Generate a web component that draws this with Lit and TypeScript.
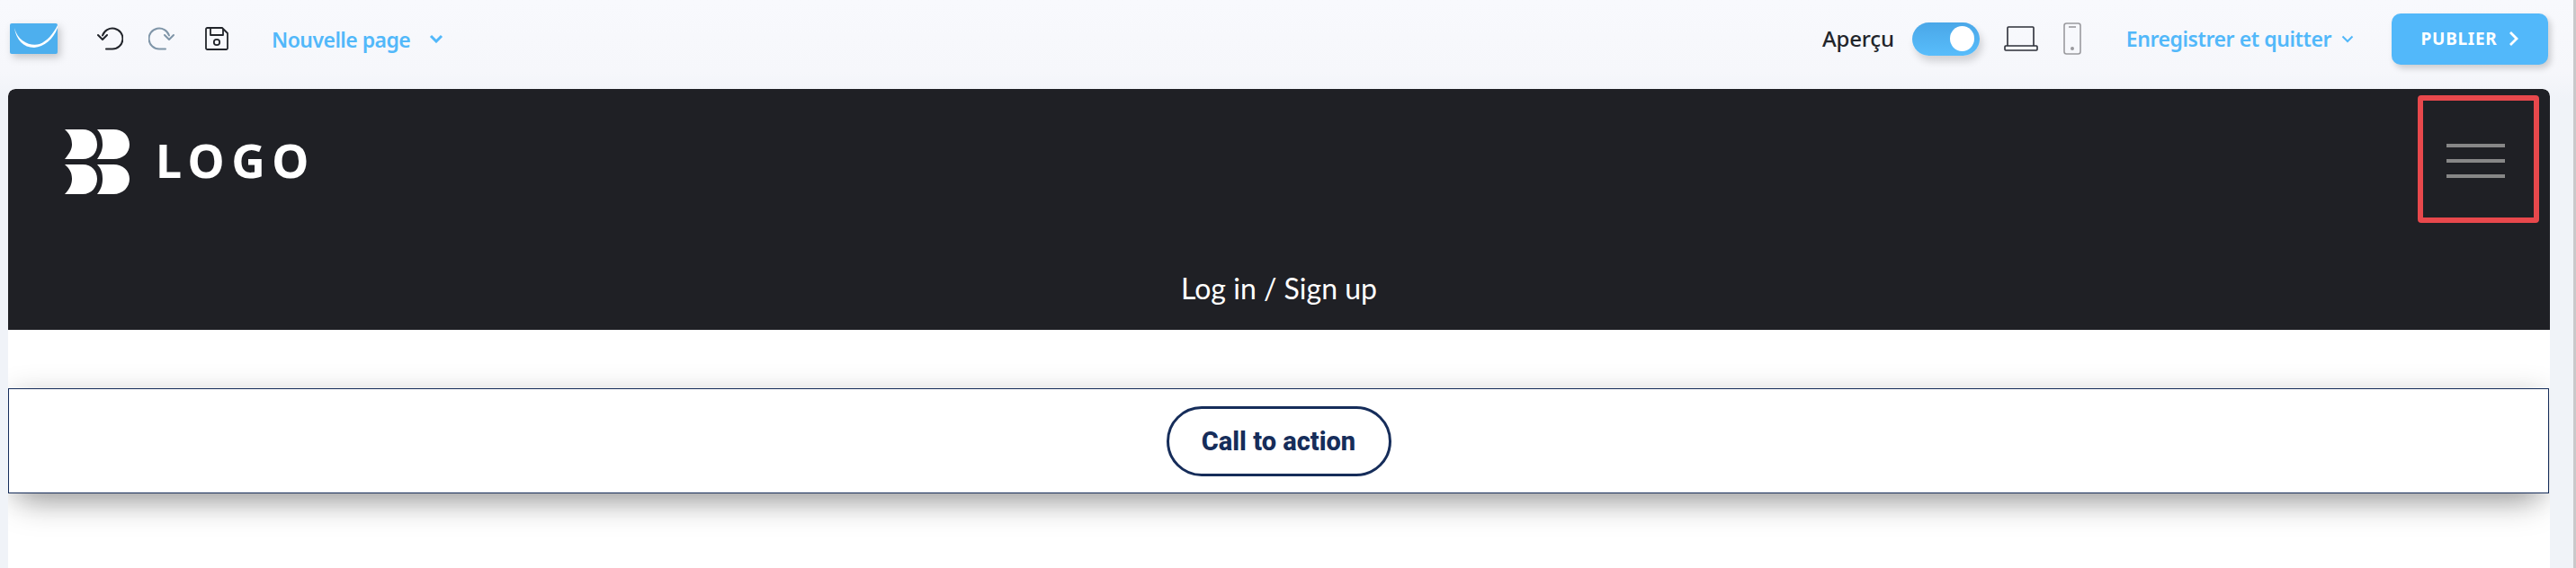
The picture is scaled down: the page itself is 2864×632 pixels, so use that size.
import { LitElement, html, css } from "lit";
import { customElement } from "lit/decorators.js";

@customElement("app-root")
export class AppRoot extends LitElement {
  static styles = css`
    :host { display: block; width: 2864px; height: 632px; overflow: hidden; background: linear-gradient(180deg,#f8f9fd 0,#f6f7fb 80px,#f0f3f8 110px); font-family: "Noto Sans", sans-serif; position: relative; }
    .toolbar { height: 99px; box-sizing: border-box; display: flex; align-items: center; padding: 0 31px 13px 11px; }
    .brand { width: 53px; height: 34px; display: block; filter: drop-shadow(3px 4px 4px rgba(0,0,0,.2)); margin-right: 44px; }
    .ic { display: block; flex: none; }
    .undo { margin-right: 28px; }
    .redo { margin-right: 34px; }
    .save { margin-right: 48px; }
    .blue { color: #52b8fa; font-weight: 600; white-space: nowrap; }
    .page { font-size: 23px; letter-spacing: -.55px; margin-right: 21px; line-height: 30px; padding-top: 2px; }
    .spacer { flex: 1; }
    .apercu { font-size: 24px; font-weight: 500; color: #22252b; margin-right: 20px; letter-spacing: -.2px; line-height: 30px; }
    .switch { width: 75px; height: 37px; border-radius: 19px; background: linear-gradient(180deg,#4aa7e8,#58bdfb); box-shadow: 3px 6px 8px rgba(0,0,0,.16); display: flex; align-items: center; justify-content: flex-end; padding-right: 6px; box-sizing: border-box; margin-right: 27px; }
    .knob { width: 27px; height: 28px; background: #fff; border-radius: 50%; }
    .laptop { margin-right: 28px; }
    .phone { margin-right: 50px; }
    .save-quit { font-size: 23px; letter-spacing: -.42px; margin-right: 11px; line-height: 30px; }
    .sq-ch { margin-right: 42px; }
    .publish { width: 174px; height: 57px; box-sizing: border-box; background: #52b8fa; border-radius: 10px; color: #fff; font-size: 19px; font-weight: 700; display: flex; align-items: center; justify-content: center; gap: 13px; box-shadow: 3px 4px 7px rgba(0,0,0,.18); letter-spacing: .7px; }
    .canvas { margin: 0 29px 0 9px; height: 533px; background: #fff; border-radius: 8px 8px 0 0; overflow: hidden; display: flex; flex-direction: column; }
    .head { height: 268px; background: #1f2025; border-radius: 8px 8px 0 0; box-sizing: border-box; display: flex; flex-direction: column; padding: 7px 12px 0 0; }
    .head-top { display: flex; justify-content: space-between; align-items: flex-start; }
    .logo { display: flex; align-items: center; margin: 37px 0 0 63px; gap: 29px; }
    .logo-text { color: #fff; font-size: 52px; font-weight: 700; letter-spacing: 7.5px; line-height: 67px; padding-bottom: 6px; }
    .menu { width: 135px; height: 142px; box-sizing: border-box; border: 6px solid #e8484c; border-radius: 4px; display: flex; flex-direction: column; justify-content: center; align-items: center; gap: 13px; padding: 3px 6px 0 0; }
    .menu i { display: block; width: 65px; height: 4px; background: #878787; }
    .login { text-align: center; color: #fff; font-family: "Lato", sans-serif; font-size: 32px; font-weight: 400; line-height: 40px; margin: 53px 0 0 12px; }
    .section { margin-top: 65px; margin-right: 1px; height: 117px; box-sizing: border-box; border: 1px solid #162d5a; background: #fff; box-shadow: 0 20px 36px -12px rgba(0,0,0,.36), 0 0 30px -4px rgba(0,0,0,.18); display: flex; align-items: center; justify-content: center; }
    .cta { width: 250px; height: 78px; box-sizing: border-box; border: 3px solid #162d5a; border-radius: 39px; color: #162d5a; font-family: Roboto, sans-serif; font-weight: 800; font-size: 29px; display: flex; align-items: center; justify-content: center; }
    .sb { position: absolute; top: 0; right: 0; bottom: 0; width: 3px; background: #c9c9cb; }
  `;

  render() {
    return html`
      <div class="toolbar">
        <svg class="ic brand" viewBox="0 0 53 34">
          <rect width="53" height="34" rx="2" fill="#4dafee"/>
          <path d="M5 5 C9 21 24 26 33 23 C41 20 48 12 53 2 L53 5 C48 18 38 26 27 27 C15 27 7 18 5 5 Z" fill="#fff"/>
        </svg>
        <svg class="ic undo" width="29" height="26" viewBox="0 0 29 26" fill="none" stroke="#22252b" stroke-width="2" stroke-linecap="round" stroke-linejoin="round">
          <path d="M10 24.5 H17 A11.5 11.5 0 1 0 6 9.5"/><path d="M1 9 L6 14 L11 9"/>
        </svg>
        <svg class="ic redo" width="29" height="26" viewBox="0 0 29 26" fill="none" stroke="#7f95a8" stroke-width="2" stroke-linecap="round" stroke-linejoin="round">
          <path d="M19 24.5 H12 A11.5 11.5 0 1 1 23 9.5"/><path d="M28 9 L23 14 L18 9"/>
        </svg>
        <svg class="ic save" width="26" height="26" viewBox="0 0 26 26" fill="none" stroke="#22252b" stroke-width="1.8" stroke-linejoin="round">
          <path d="M2.5 1 H19 L25 7 V23.5 A1.5 1.5 0 0 1 23.5 25 H2.5 A1.5 1.5 0 0 1 1 23.5 V2.5 A1.5 1.5 0 0 1 2.5 1 Z"/>
          <path d="M6 1 V9 H20 V2"/><circle cx="13" cy="17" r="3.2"/>
        </svg>
        <span class="blue page">Nouvelle page</span>
        <svg class="ic" width="16" height="10" viewBox="0 0 16 10" fill="none" stroke="#52b8fa" stroke-width="3"><path d="M2 2 L8 8 L14 2"/></svg>
        <div class="spacer"></div>
        <span class="apercu">Aperçu</span>
        <div class="switch"><div class="knob"></div></div>
        <svg class="ic laptop" width="38" height="28" viewBox="0 0 38 28" fill="none" stroke="#2c2f38" stroke-width="1.6">
          <path d="M4 22 V2 A1 1 0 0 1 5 1 H32 A1 1 0 0 1 33 2 V22"/><rect x="1" y="22" width="36" height="5" rx="1"/>
        </svg>
        <svg class="ic phone" width="20" height="36" viewBox="0 0 20 36" fill="none" stroke="#9a9a9e" stroke-width="1.6">
          <rect x="1" y="1" width="18" height="34" rx="2.5"/><path d="M6 5 H14"/><circle cx="10" cy="29" r="1.2" fill="#9a9a9e"/>
        </svg>
        <span class="blue save-quit">Enregistrer et quitter</span>
        <svg class="ic sq-ch" width="14" height="9" viewBox="0 0 14 9" fill="none" stroke="#52b8fa" stroke-width="2"><path d="M1.5 1.5 L7 7 L12.5 1.5"/></svg>
        <div class="publish">
          <span>PUBLIER</span>
          <svg class="ic" width="11" height="18" viewBox="0 0 11 18" fill="none" stroke="#fff" stroke-width="2.8"><path d="M2 2 L9 9 L2 16"/></svg>
        </div>
      </div>
      <div class="canvas">
        <div class="head">
          <div class="head-top">
            <div class="logo">
              <svg class="ic" width="72" height="74" viewBox="0 0 72 74" fill="#fff">
                <path d="M0 1 H20 C30 1 36 8 36 18 C36 27 30 34 20 34 H0 C6 27 8 22 8 18 C8 12 6 6 0 1 Z"/>
                <path d="M36 1 H54 C65 1 72 8 72 18 C72 27 65 34 54 34 H36 C41 27 42 22 42 18 C42 12 41 6 36 1 Z"/>
                <path d="M0 40 H20 C30 40 36 47 36 56 C36 65 30 73 20 73 H0 C6 67 8 61 8 56 C8 50 6 45 0 40 Z"/>
                <path d="M36 40 H54 C65 40 72 47 72 56 C72 65 65 73 54 73 H36 C41 67 42 61 42 56 C42 50 41 45 36 40 Z"/>
              </svg>
              <span class="logo-text">LOGO</span>
            </div>
            <div class="menu"><i></i><i></i><i></i></div>
          </div>
          <div class="login">Log in / Sign up</div>
        </div>
        <div class="section"><div class="cta">Call to action</div></div>
      </div>
      <div class="sb"></div>
    `;
  }
}
